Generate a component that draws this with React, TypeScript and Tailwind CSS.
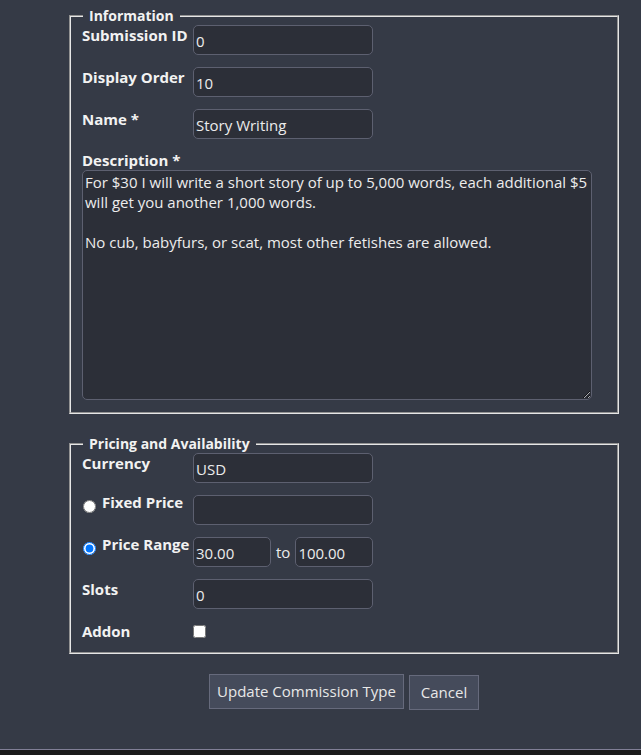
import React from "react";

const inputCls =
  "h-[30px] w-[180px] rounded-[5px] border border-[#5d6070] bg-[#2c2f38] px-[2px] pt-[1px] text-[15px] text-[#ececec] outline-none";

const labelCls = "w-[111px] shrink-0 text-[15px] font-bold leading-5 text-[#f2f2f2]";

const fieldsetCls =
  "border-2 [border-style:groove] border-[#e6e6e6] pl-[11px] pr-[12px] m-0";

const legendCls = "ml-px px-[6px] text-[14px] font-bold leading-[19px] text-[#f2f2f2]";

const Row = ({ label, value }: { label: string; value: string }) => (
  <div className="flex items-start">
    <label className={labelCls}>{label}</label>
    <input className={inputCls} defaultValue={value} />
  </div>
);

const RadioRow = ({
  label,
  checked,
  children,
}: {
  label: string;
  checked?: boolean;
  children: React.ReactNode;
}) => (
  <div className="flex items-start">
    <div className="flex w-[111px] shrink-0 items-start -mt-[3px]">
      <input
        type="radio"
        name="pricing"
        defaultChecked={checked}
        className="m-0 mt-[8px] mr-[6px] ml-px h-[13px] w-[13px]"
      />
      <span className="text-[15px] font-bold leading-5 text-[#f2f2f2]">{label}</span>
    </div>
    {children}
  </div>
);

export default function App() {
  return (
    <div className="font-['Open_Sans','Noto_Sans',sans-serif]">
      <div className="h-[749px] bg-[#353a46] pt-[6px]">
        <form className="ml-[69px] w-[550px]">
          <fieldset className={`${fieldsetCls} pb-[12px]`}>
            <legend className={legendCls}>Information</legend>
            <div className="flex flex-col gap-3">
              <Row label="Submission ID" value="0" />
              <Row label="Display Order" value="10" />
              <Row label="Name *" value="Story Writing" />
              <div>
                <label className="block text-[15px] font-bold leading-[19px] text-[#f2f2f2]">
                  Description *
                </label>
                <textarea
                  className="block h-[230px] w-[510px] rounded-[5px] border border-[#5d6070] bg-[#2c2f38] px-[2px] pt-px text-[15px] leading-5 text-[#ececec] outline-none"
                  defaultValue={
                    "For $30 I will write a short story of up to 5,000 words, each additional $5 will get you another 1,000 words.\n\nNo cub, babyfurs, or scat, most other fetishes are allowed."
                  }
                />
              </div>
            </div>
          </fieldset>

          <fieldset className={`${fieldsetCls} mt-[20px] pb-[11px]`}>
            <legend className={legendCls}>Pricing and Availability</legend>
            <div className="flex flex-col gap-3">
              <Row label="Currency" value="USD" />
              <RadioRow label="Fixed Price">
                <input className={inputCls} defaultValue="" />
              </RadioRow>
              <RadioRow label="Price Range" checked>
                <div className="flex items-center gap-[5px]">
                  <input className={`${inputCls} !w-[78px]`} defaultValue="30.00" />
                  <span className="text-[15px] text-[#ececec]">to</span>
                  <input className={`${inputCls} !w-[78px]`} defaultValue="100.00" />
                </div>
              </RadioRow>
              <Row label="Slots" value="0" />
              <div className="flex items-start">
                <label className={labelCls}>Addon</label>
                <input type="checkbox" className="m-0 mt-[4px] h-[13px] w-[13px]" />
              </div>
            </div>
          </fieldset>

          <div className="mt-[20px] flex items-start justify-center gap-[5px]">
            <button
              type="button"
              className="h-[35px] w-[195px] border border-[#666a7c] bg-[#454b5b] text-[15px] text-[#e8e8e8]"
            >
              Update Commission Type
            </button>
            <button
              type="button"
              className="mt-px h-[35px] w-[70px] border border-[#666a7c] bg-[#454b5b] text-[15px] text-[#e8e8e8]"
            >
              Cancel
            </button>
          </div>
        </form>
      </div>
      <div className="h-[6px] border-t border-[#807e96] bg-[#1a1a1a]" />
    </div>
  );
}
